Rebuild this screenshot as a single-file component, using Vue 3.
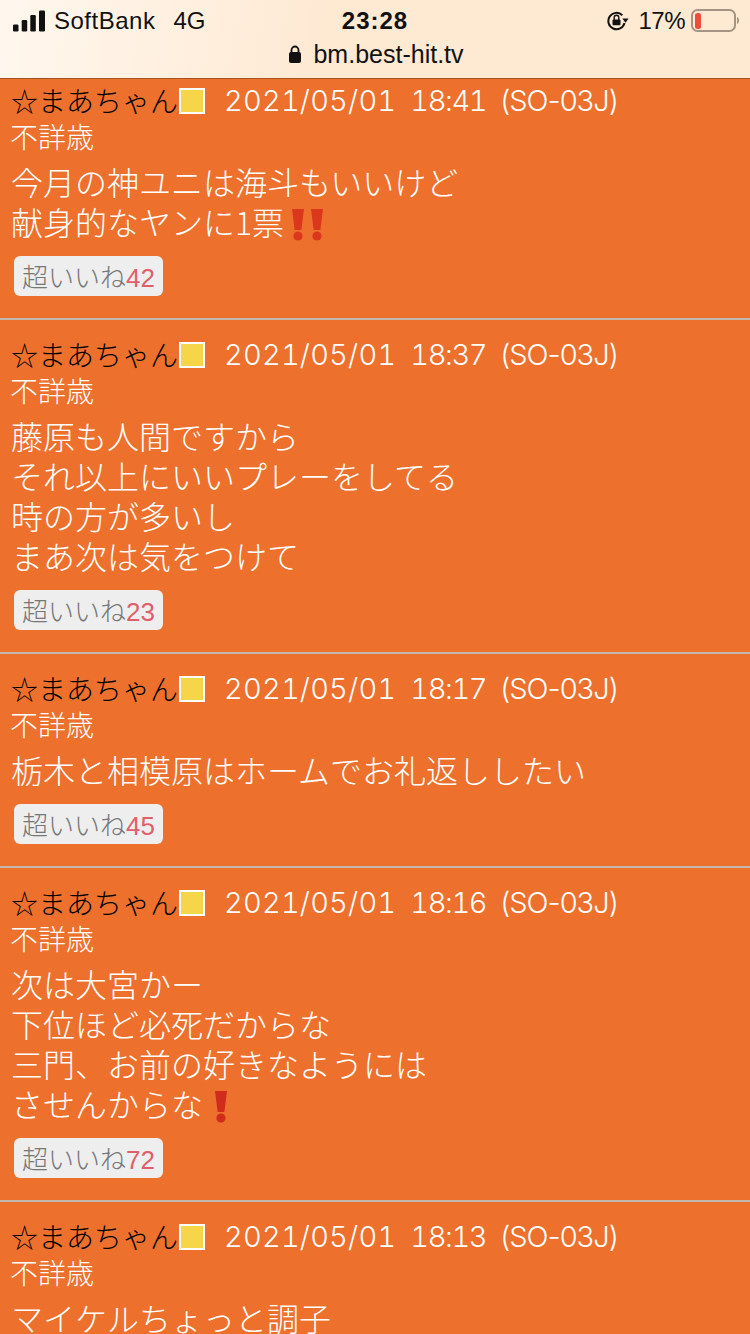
<script setup>
const posts = [
  { time: '18:41', likes: 42, lines: ['今月の神ユニは海斗もいいけど', '献身的なヤンに1票'], mark: 2 },
  { time: '18:37', likes: 23, lines: ['藤原も人間ですから', 'それ以上にいいプレーをしてる', '時の方が多いし', 'まあ次は気をつけて'], mark: 0 },
  { time: '18:17', likes: 45, lines: ['栃木と相模原はホームでお礼返ししたい'], mark: 0 },
  { time: '18:16', likes: 72, lines: ['次は大宮かー', '下位ほど必死だからな', '三門、お前の好きなようには', 'させんからな'], mark: 1 },
  { time: '18:13', likes: 0, lines: ['マイケルちょっと調子'], mark: 0 },
]
</script>

<template>
  <div class="page">
    <header class="bar">
      <div class="status">
        <div class="left">
          <svg class="signal" width="34" height="22" viewBox="0 0 34 22">
            <rect x="1" y="14.500" width="5.500" height="7" rx="1.200" />
            <rect x="9.700" y="10" width="5.500" height="11.500" rx="1.200" />
            <rect x="18.300" y="5" width="5.500" height="16.500" rx="1.200" />
            <rect x="27" y="0.500" width="6" height="21" rx="1.200" />
          </svg>
          <span class="carrier">SoftBank</span>
          <span class="net">4G</span>
        </div>
        <div class="clock">23:28</div>
        <div class="right">
          <svg class="lock-rot" width="22" height="22" viewBox="0 0 22 22">
            <path d="M17.500 13A8.200 8.200 0 1 1 15.300 5.200" fill="none" stroke="#111" stroke-width="2" />
            <path d="M15.400 8.600h6.200l-3.100 4.200z" fill="#111" />
            <rect x="5.500" y="9.500" width="8" height="5.800" rx="1" fill="#111" />
            <path d="M7.200 10V7.600a2.300 2.300 0 0 1 4.600 0V10" fill="none" stroke="#111" stroke-width="1.400" />
          </svg>
          <span class="pct">17%</span>
          <svg class="battery" width="49" height="24" viewBox="0 0 49 24">
            <rect x="1" y="1" width="43" height="21" rx="5.500" fill="none" stroke="#a89283" stroke-width="2" />
            <rect x="4" y="4" width="6" height="16" rx="2.500" fill="#ee4b3c" />
            <path d="M46 8c1.300.4 2 1.700 2 3.500s-.7 3.100-2 3.500z" fill="#a89283" />
          </svg>
        </div>
      </div>
      <div class="address">
        <svg class="lock" width="14" height="18" viewBox="0 0 14 18">
          <rect x="1" y="7" width="12" height="11" rx="2" fill="#111" />
          <path d="M3.500 8V5a3.500 3.500 0 0 1 7 0v3" fill="none" stroke="#111" stroke-width="1.800" />
        </svg>
        <span>bm.best-hit.tv</span>
      </div>
    </header>

    <main class="list">
      <article v-for="p in posts" :key="p.time" class="post">
        <div class="head">
          <span class="name"><span class="star">☆</span>まあちゃん</span><span class="flag"></span>
          <span class="date"><span class="day">2021/05/01</span><span class="hour">{{ p.time }}</span><span class="model">(SO-03J)</span></span>
        </div>
        <div class="sub">不詳歳</div>
        <div class="body">
          <div v-for="(l, i) in p.lines" :key="i" class="line">
            {{ l }}<span v-if="i === p.lines.length - 1 && p.mark" class="marks" :class="{ spaced: p.mark === 1 }">
              <svg v-for="n in p.mark" :key="n" width="12" height="32" viewBox="0 0 12 32">
                <path d="M0 0h12l-2.600 21H2.600z" :fill="p.mark === 1 ? '#cf2c1c' : '#db371d'" />
                <circle cx="6" cy="27" r="4.600" :fill="p.mark === 1 ? '#cf2c1c' : '#db371d'" />
              </svg>
            </span>
          </div>
        </div>
        <div v-if="p.likes" class="like">超いいね<span class="count">{{ p.likes }}</span></div>
      </article>
    </main>
  </div>
</template>

<style>
html, body { margin: 0; padding: 0; }
body { background: #ed702d; overflow: hidden; }
</style>

<style scoped>
.page {
  width: 750px;
  height: 1334px;
  overflow: hidden;
  background: #ed702d;
  font-family: "Noto Sans CJK JP", "Liberation Sans", sans-serif;
  font-weight: 300;
}
.bar {
  height: 78px;
  border-bottom: 1px solid #a5531f;
  background: linear-gradient(100deg, #fff7ee 0%, #fee9d2 45%, #fee9d2 100%);
  color: #111;
  font-family: "Liberation Sans", sans-serif;
  font-weight: 400;
  position: relative;
  z-index: 1;
}
.status {
  height: 42px;
  display: grid;
  grid-template-columns: 1fr auto 1fr;
  align-items: center;
  font-size: 24px;
}
.left { display: flex; align-items: center; padding-left: 12px; }
.signal { fill: #111; margin-right: 8px; }
.carrier { letter-spacing: 0.5px; }
.net { margin-left: 18px; }
.clock { font-weight: 700; letter-spacing: 1px; }
.right { display: flex; align-items: center; justify-content: flex-end; padding-right: 10px; }
.pct { margin: 0 6px 0 9px; letter-spacing: -0.5px; }
.battery { margin-top: -1px; }
.address {
  display: flex;
  align-items: center;
  justify-content: center;
  gap: 11px;
  font-size: 25px;
  height: 24px;
  padding-left: 2px;
}
.post { padding: 16px 0 22px; border-bottom: 2px solid #c0b8ae; }
.post:first-child { padding-top: 3px; }
.head {
  height: 36px;
  padding: 0 0 1px 10px;
  display: flex;
  align-items: center;
  font-size: 28px;
}
.name { color: #000; }
.star { font-size: 27px; margin: 0 0 0 1px; }
.flag {
  width: 22px;
  height: 22px;
  background: #f7d548;
  border: 2px solid #fff;
  margin: 2px 0 0 1px;
}
.date {
  color: #fff;
  margin-left: 19px;
  font-family: Inter, "Liberation Sans", sans-serif;
  font-size: 29px;
  font-weight: 300;
  display: flex;
}
.day { letter-spacing: 0.2px; font-variant-numeric: tabular-nums; }
.hour { letter-spacing: -1.400px; margin-left: 14px; font-variant-numeric: tabular-nums; }
.model { letter-spacing: -1px; margin-left: 14px; }
.sub {
  color: #fff;
  font-size: 28px;
  line-height: 36px;
  padding-left: 10px;
  margin-top: -1px;
}
.body { margin-top: 7px; padding-left: 11px; color: #fff; font-size: 32px; line-height: 40px; }
.line { white-space: nowrap; height: 40px; }
.marks { display: inline-flex; gap: 7px; vertical-align: -6px; margin-left: 8px; }
.marks.spaced { margin-left: 12px; }
.like {
  display: inline-block;
  margin: 15px 0 0 14px;
  height: 40px;
  line-height: 40px;
  padding: 0 8px;
  box-sizing: border-box;
  width: 149px;
  background: #eeeeee;
  border-radius: 6px;
  color: #777;
  font-size: 26px;
  white-space: nowrap;
  vertical-align: top;
}
.count { color: #e0606a; font-family: "Liberation Sans", sans-serif; }
</style>
